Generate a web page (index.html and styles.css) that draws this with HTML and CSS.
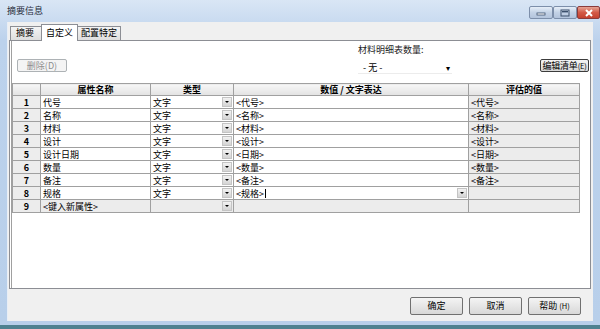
FILE: index.html
```html
<!DOCTYPE html>
<html lang="zh">
<head>
<meta charset="utf-8">
<title>摘要信息</title>
<link rel="stylesheet" href="styles.css">
</head>
<body>
<div class="window">
  <div class="titlebar">
    <span class="title">摘要信息</span>
    <div class="controls">
      <span class="ctl"><svg width="10" height="6" viewBox="0 0 10 6"><rect x="1" y="3" width="8" height="2" fill="#fff" stroke="#3b4f6b" stroke-width="0.8"/></svg></span>
      <span class="ctl"><svg width="10" height="8" viewBox="0 0 10 8"><rect x="1" y="1" width="8" height="6" fill="none" stroke="#3b4f6b" stroke-width="1"/><rect x="2" y="2" width="6" height="1.4" fill="#3b4f6b"/></svg></span>
      <span class="ctl close"><svg width="10" height="8" viewBox="0 0 10 8"><path d="M2 1 L8 7 M8 1 L2 7" stroke="#fff" stroke-width="2"/></svg></span>
    </div>
  </div>
  <div class="client">
    <div class="tabs">
      <span class="tab">摘要</span>
      <span class="tab active">自定义</span>
      <span class="tab">配置特定</span>
    </div>
    <div class="panel">
      <div class="toolbar">
        <button class="btn del">删除(D)</button>
        <div class="bom">
          <span class="bom-label">材料明细表数量:</span>
          <div class="select"><span>- 无 -</span><span class="sel-arrow">▾</span></div>
        </div>
        <button class="btn edit">编辑清单<span class="acc">(E)</span></button>
      </div>
      <table class="grid">
        <colgroup>
          <col class="c-num"><col class="c-name"><col class="c-type"><col class="c-val"><col class="c-eval">
        </colgroup>
        <thead>
          <tr><th></th><th>属性名称</th><th>类型</th><th>数值 / 文字表达</th><th>评估的值</th></tr>
        </thead>
        <tbody>
          <tr><td class="num">1</td><td>代号</td><td><div class="drop"><span>文字</span><span class="dbtn"></span></div></td><td>&lt;代号&gt;</td><td class="ev">&lt;代号&gt;</td></tr>
          <tr><td class="num">2</td><td>名称</td><td><div class="drop"><span>文字</span><span class="dbtn"></span></div></td><td>&lt;名称&gt;</td><td class="ev">&lt;名称&gt;</td></tr>
          <tr><td class="num">3</td><td>材料</td><td><div class="drop"><span>文字</span><span class="dbtn"></span></div></td><td>&lt;材料&gt;</td><td class="ev">&lt;材料&gt;</td></tr>
          <tr><td class="num">4</td><td>设计</td><td><div class="drop"><span>文字</span><span class="dbtn"></span></div></td><td>&lt;设计&gt;</td><td class="ev">&lt;设计&gt;</td></tr>
          <tr><td class="num">5</td><td>设计日期</td><td><div class="drop"><span>文字</span><span class="dbtn"></span></div></td><td>&lt;日期&gt;</td><td class="ev">&lt;日期&gt;</td></tr>
          <tr><td class="num">6</td><td>数量</td><td><div class="drop"><span>文字</span><span class="dbtn"></span></div></td><td>&lt;数量&gt;</td><td class="ev">&lt;数量&gt;</td></tr>
          <tr><td class="num">7</td><td>备注</td><td><div class="drop"><span>文字</span><span class="dbtn"></span></div></td><td>&lt;备注&gt;</td><td class="ev">&lt;备注&gt;</td></tr>
          <tr><td class="num">8</td><td>规格</td><td><div class="drop"><span>文字</span><span class="dbtn"></span></div></td><td><div class="drop"><span>&lt;规格&gt;<span class="caret"></span></span><span class="dbtn"></span></div></td><td class="ev"></td></tr>
          <tr class="new"><td class="num">9</td><td>&lt;键入新属性&gt;</td><td><div class="drop"><span></span><span class="dbtn"></span></div></td><td></td><td class="ev"></td></tr>
        </tbody>
      </table>
    </div>
    <div class="footer">
      <button class="btn foot">确定</button>
      <button class="btn foot">取消</button>
      <button class="btn foot">帮助 <span class="acc">(H)</span></button>
    </div>
  </div>
</div>
</body>
</html>
```
FILE: styles.css
```css
* { box-sizing: border-box; }
html, body { margin: 0; padding: 0; }
body {
  width: 600px; height: 329px; overflow: hidden;
  font-family: "Noto Sans CJK SC", "Liberation Sans", sans-serif;
  font-size: 9px; color: #000;
  background: #5f8ea3;
}
.window {
  width: 600px; height: 329px;
  display: flex; flex-direction: column;
  background: linear-gradient(#d9e6f5, #bcd2ec 40px, #b8cfea);
  border-bottom: 4px solid #4f8190;
  padding: 0 7px 4px 7px;
}
.titlebar {
  height: 22px; flex: none;
  display: flex; align-items: flex-start;
}
.title { margin-top: 5px; line-height: 12px; color: #1e2b3a; }
.controls { margin-left: auto; display: flex; margin-top: 6px; margin-right: -7px; }
.ctl {
  width: 24px; height: 13px;
  display: flex; align-items: center; justify-content: center;
  border: 1px solid #7d8faa; border-radius: 2px;
  background: linear-gradient(#e6eef8, #c3d2e6 50%, #b3c4dc);
}
.ctl.close {
  width: 23px;
  border-color: #8a3b3b;
  background: linear-gradient(#e6a394, #d35a47 50%, #c4412f);
}
.client {
  flex: 1;
  display: flex; flex-direction: column;
  background: #f0f0f0;
  border-left: 1px solid #e8eef6;
}
.tabs {
  height: 18px; flex: none;
  display: flex; align-items: flex-end;
  padding-left: 2px;
  position: relative; z-index: 1;
}
.tab {
  height: 14px; line-height: 12px;
  padding: 0 3px;
  border: 1px solid #8c8e94; border-bottom: none;
  background: linear-gradient(#f4f4f4, #dedede);
  margin-right: -1px;
  white-space: nowrap;
}
.tab:first-child { width: 33px; padding-left: 5px; }
.tab.active {
  height: 17px; line-height: 15px;
  background: #fff;
  margin: 0 -1px -1px -1px;
  padding: 0 4px;
  position: relative; z-index: 2;
}
.panel {
  height: 249px; flex: none;
  margin: 0 2px 0 1px;
  background: #fff;
  border: 1px solid #8c8e94;
  box-shadow: inset 1px 0 0 #fff, inset 2px 0 0 #a0a0a0;
  padding-left: 2px;
}
.toolbar {
  height: 42px;
  display: flex; align-items: flex-start;
}
.btn {
  font: inherit; color: #000;
  height: 13px; padding: 0; line-height: 11px;
  border: 1px solid #707070; border-radius: 2px;
  background: linear-gradient(#f4f4f4, #e6e6e6 50%, #d8d8d8);
  white-space: nowrap;
}
.acc { font-size: 7.5px; }
.btn.del {
  width: 50px; margin-top: 18px; margin-left: 5px;
  color: #8d8d8d; border-color: #adb2b5;
  background: #f4f4f4;
}
.bom { margin-left: 291px; margin-top: 3px; width: 94px; }
.bom-label { display: block; line-height: 11px; height: 12px; color: #222; }
.select {
  margin-top: 5px;
  height: 13px; line-height: 13px;
  display: flex; justify-content: space-between;
  padding: 0 2px 0 5px;
  background: #fff;
  border-bottom: 1px solid #ececec;
}
.sel-arrow { font-size: 8px; }
.btn.edit {
  width: 49px; margin-left: auto; margin-right: 1px; margin-top: 18px;
  border: 1px solid #3c3c3c;
  letter-spacing: -0.2px;
}
.grid {
  border-collapse: collapse;
  table-layout: fixed;
  width: 567px;
}
.c-num { width: 28px; }
.c-name { width: 110px; }
.c-type { width: 83px; }
.c-val { width: 235px; }
.c-eval { width: 111px; }
.grid th, .grid td {
  border: 1px solid #a0a0a0;
  padding: 0 2px;
  height: 13px; line-height: 11px;
  white-space: nowrap; overflow: hidden;
  text-align: left; font-weight: normal;
}
.grid th {
  height: 12px;
  text-align: center; font-weight: bold;
  background: linear-gradient(#f7f7f7, #e2e2e2);
}
.grid td.num {
  text-align: center; font-weight: bold;
  background: #ededed;
}
.grid td.ev { background: #ececec; }
.grid tr.new td { background: #ececec; }
.drop {
  display: flex; justify-content: space-between; align-items: center;
  margin-right: -1px;
}
.dbtn {
  width: 10px; height: 10px;
  background: linear-gradient(#f2f2f2, #d4d4d4);
  border: 1px solid #c4c4c4;
  position: relative;
}
.dbtn::after {
  content: ""; position: absolute; left: 2px; top: 3px;
  border-left: 2px solid transparent; border-right: 2px solid transparent;
  border-top: 2px solid #000;
  width: 0; height: 0;
}
.caret {
  display: inline-block; width: 1px; height: 9px;
  background: #000; vertical-align: -1px; margin-left: 1px;
}
.footer {
  display: flex; justify-content: flex-end;
  gap: 6px;
  padding: 8px 12px 0 0;
}
.btn.foot { width: 53px; height: 18px; line-height: 16px; }
```
